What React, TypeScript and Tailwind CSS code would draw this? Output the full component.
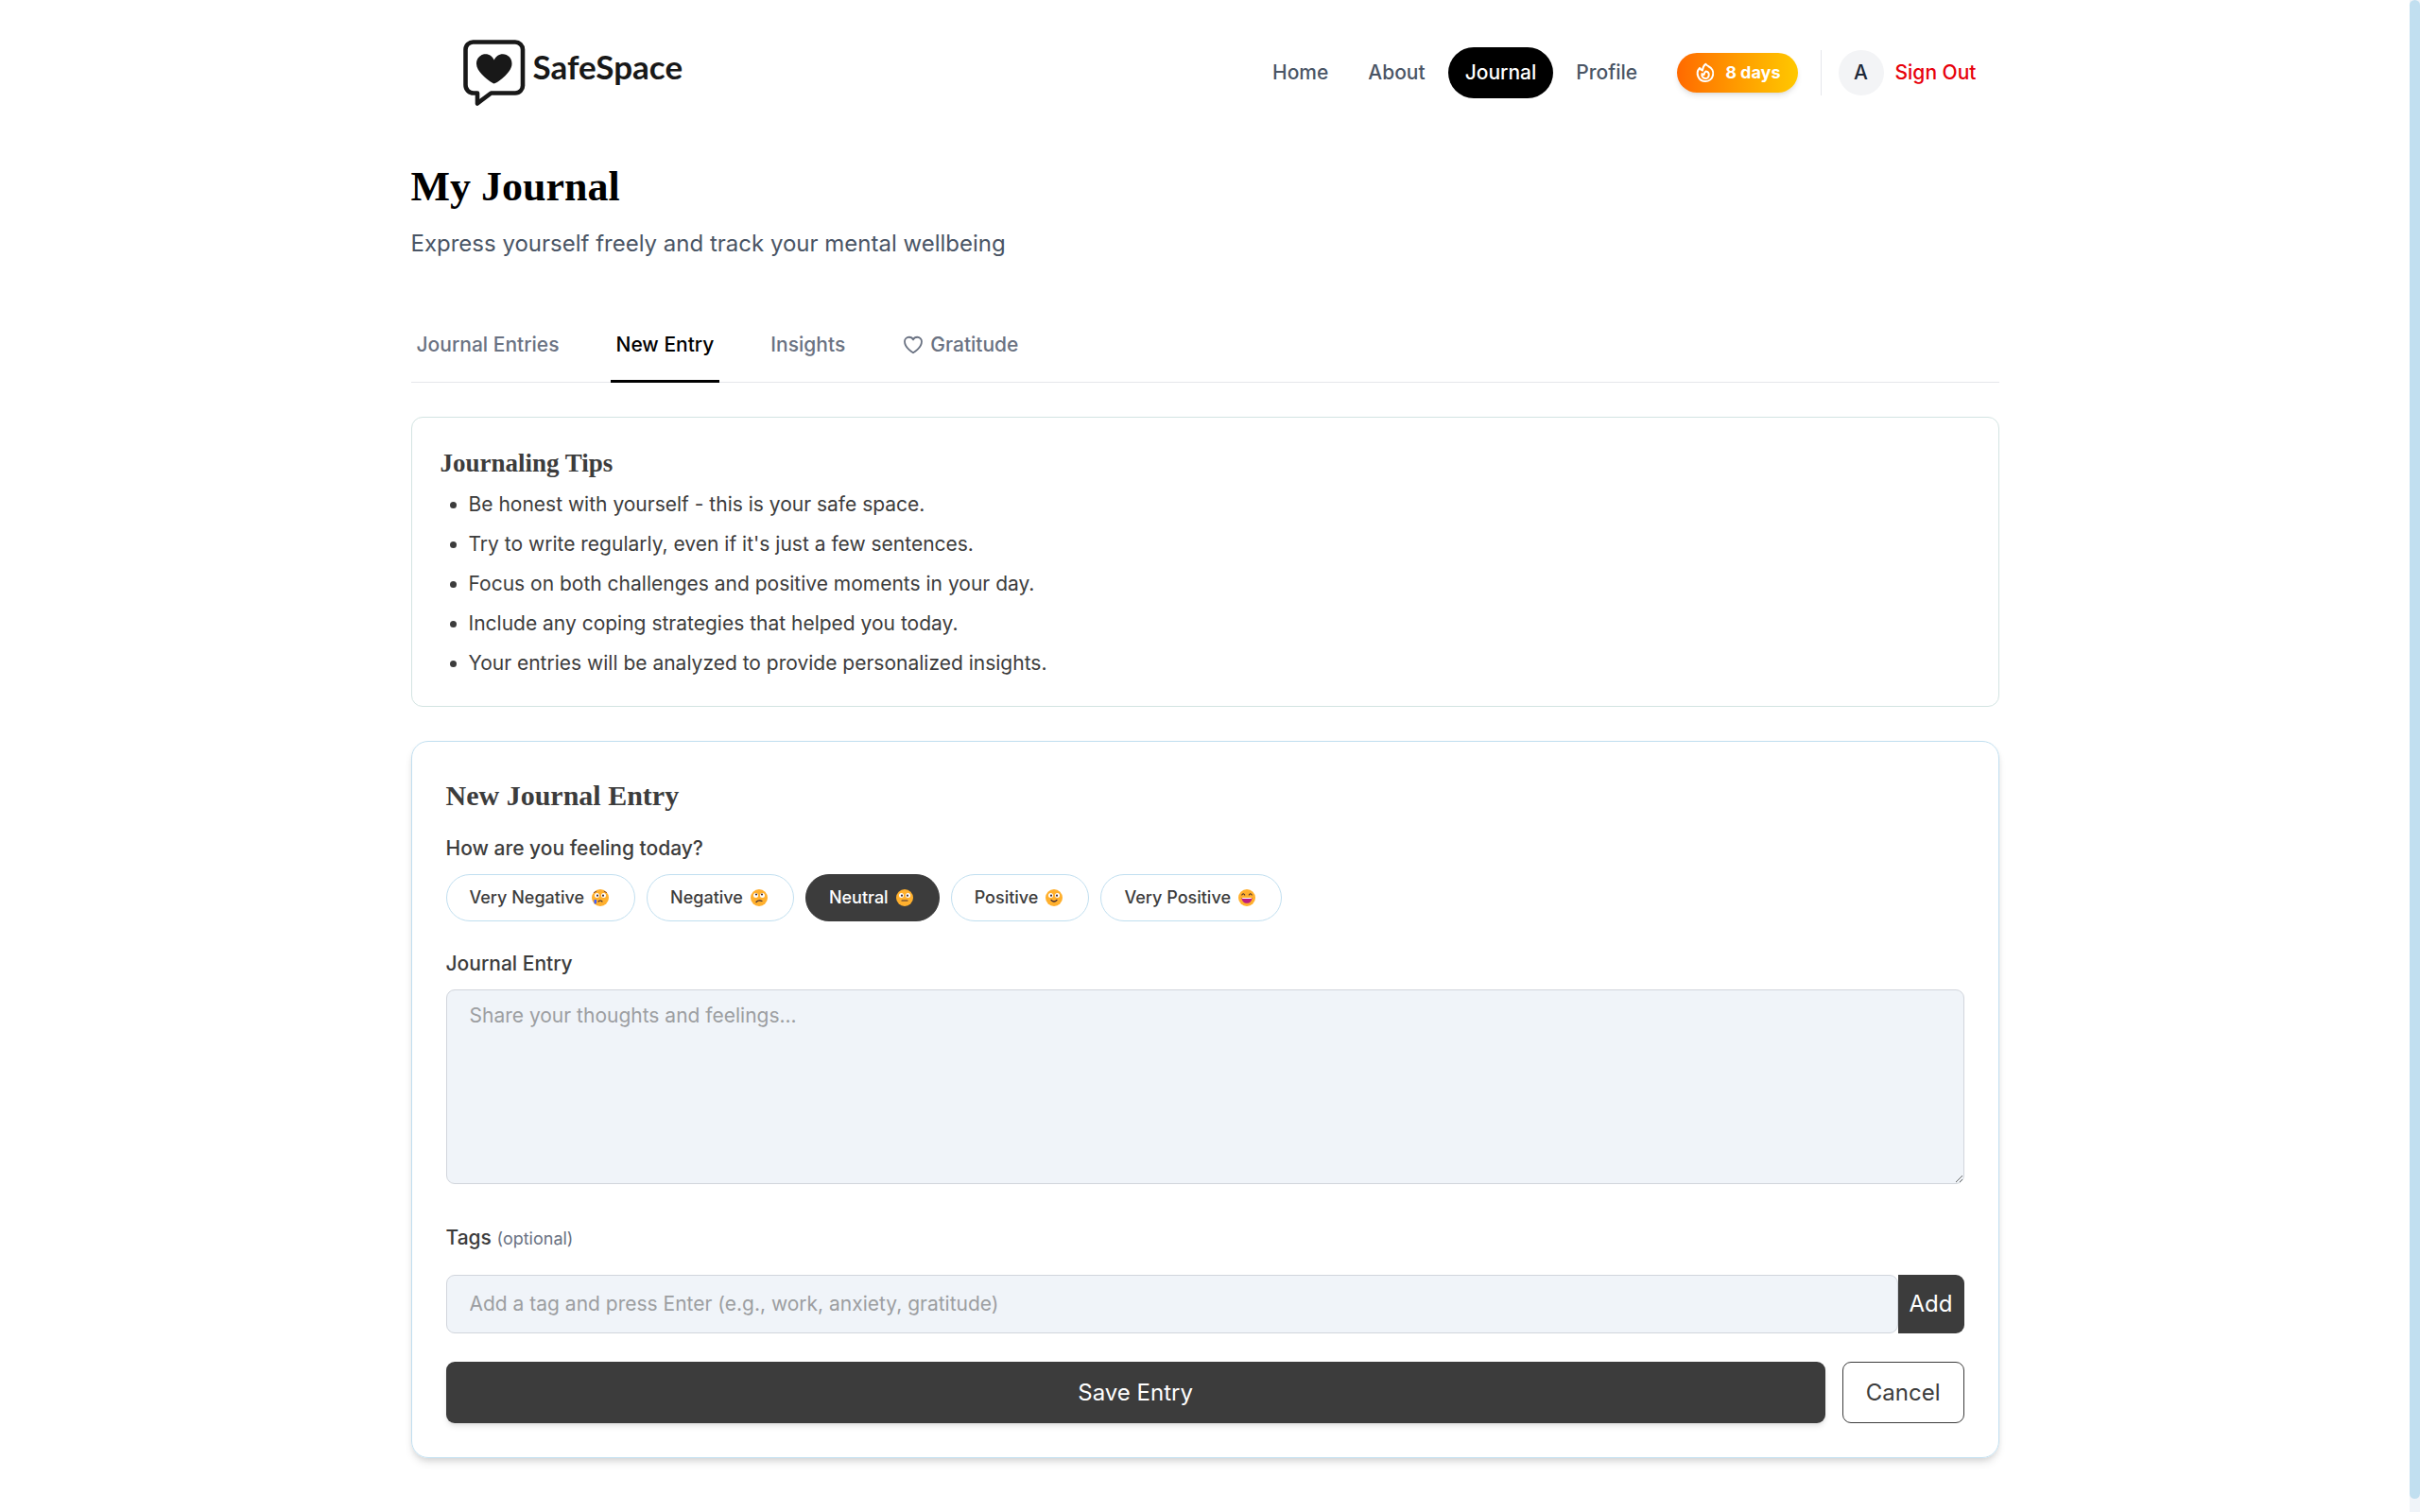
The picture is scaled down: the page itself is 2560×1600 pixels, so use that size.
import { useState } from "react";

const navLink =
  "rounded-full px-[18px] py-3 text-[21px] leading-[30px] font-medium";

function Logo() {
  return (
    <a href="#" aria-label="SafeSpace" className="flex items-start gap-2 text-[#181818]">
      <svg viewBox="0 0 66 72" className="h-[72px] w-[66px]" fill="none">
        <path
          d="M11 2.500H55A8 8 0 0 1 63 10.500V48A8 8 0 0 1 55 56.500H29.500L15 67.500V56.500H11A8.500 8.500 0 0 1 2.500 48V10.500A8 8 0 0 1 11 2.500Z"
          stroke="currentColor"
          strokeWidth="4.600"
          strokeLinejoin="round"
        />
        <path
          d="M32.700 46.500C31 46.500 14 35.500 14 25.500C14 19.500 18.500 15.300 23.500 15.300C28 15.300 31 18 32.700 21.500C34.400 18 37.500 15.300 42 15.300C47 15.300 51.500 19.500 51.500 25.500C51.500 35.500 34.500 46.500 32.700 46.500Z"
          fill="currentColor"
        />
      </svg>
      <span className="mt-2 font-[Lato] text-[35px] leading-[40px] font-bold">SafeSpace</span>
    </a>
  );
}

function Flame() {
  return (
    <svg viewBox="0 0 24 24" className="size-6" fill="none" stroke="currentColor" strokeWidth="2" strokeLinecap="round" strokeLinejoin="round">
      <path d="M15.362 5.214A8.252 8.252 0 0 1 12 21 8.250 8.250 0 0 1 6.038 7.048 8.287 8.287 0 0 0 9 9.600a8.983 8.983 0 0 1 3.361-6.867 8.210 8.210 0 0 0 3 2.480Z" />
      <path d="M12 18a3.750 3.750 0 0 0 .495-7.467 5.990 5.990 0 0 0-1.925 3.546 5.974 5.974 0 0 1-2.133-1.001A3.750 3.750 0 0 0 12 18Z" />
    </svg>
  );
}

function HeartOutline() {
  return (
    <svg viewBox="0 0 24 24" className="size-6" fill="none" stroke="currentColor" strokeWidth="1.8" strokeLinecap="round" strokeLinejoin="round">
      <path d="M21 8.250c0-2.485-2.099-4.500-4.688-4.500-1.935 0-3.597 1.126-4.312 2.733-.715-1.607-2.377-2.733-4.313-2.733C5.100 3.750 3 5.765 3 8.250c0 7.220 9 12 9 12s9-4.780 9-12Z" />
    </svg>
  );
}

type Mood = "crying" | "worried" | "neutral" | "smile" | "laugh";

function Face({ mood }: { mood: Mood }) {
  return (
    <svg viewBox="0 0 18 18" className="size-[18px]" fill="none" strokeLinecap="round">
      <circle cx="9" cy="9" r="9" fill="#FFB02E" />
      {mood === "laugh" ? (
        <>
          <path d="M3.800 6Q5.200 3.500 6.700 6M11.300 6Q12.800 3.500 14.200 6" stroke="#402A32" strokeWidth="1.100" />
          <path d="M3.500 9H14.500C14.500 12.500 12 14.800 9 14.800S3.500 12.500 3.500 9Z" fill="#BB1D80" />
          <path d="M4 9H14L13.700 10H4.300Z" fill="#fff" />
        </>
      ) : (
        <>
          <circle cx="5.500" cy="6.500" r="2.500" fill="#fff" />
          <circle cx="12.500" cy="6.500" r="2.500" fill="#fff" />
          <circle cx="6" cy={mood === "worried" ? 5.500 : 6.700} r="1.100" fill="#402A32" />
          <circle cx="12" cy={mood === "worried" ? 5.500 : 6.700} r="1.100" fill="#402A32" />
        </>
      )}
      {mood === "crying" && (
        <>
          <path d="M2.500 3.500L4.800 2.300M15.500 3.500L13.200 2.300" stroke="#7D4533" strokeWidth="1" />
          <path d="M7 13Q9 11 11 13" stroke="#402A32" strokeWidth="1.100" />
          <path d="M2.500 11H5V14.500A1.300 1.300 0 0 1 2.500 14.500Z" fill="#3F5FFF" />
        </>
      )}
      {mood === "worried" && <path d="M6 13.500Q8.500 11 12 12.500" stroke="#402A32" strokeWidth="1.200" />}
      {mood === "neutral" && <path d="M6 12H12" stroke="#402A32" strokeWidth="1.200" />}
      {mood === "smile" && <path d="M6 11.500Q9 14.500 12 11.500" stroke="#402A32" strokeWidth="1.200" />}
    </svg>
  );
}

const moods: { label: string; mood: Mood }[] = [
  { label: "Very Negative", mood: "crying" },
  { label: "Negative", mood: "worried" },
  { label: "Neutral", mood: "neutral" },
  { label: "Positive", mood: "smile" },
  { label: "Very Positive", mood: "laugh" },
];

const tips = [
  "Be honest with yourself - this is your safe space.",
  "Try to write regularly, even if it's just a few sentences.",
  "Focus on both challenges and positive moments in your day.",
  "Include any coping strategies that helped you today.",
  "Your entries will be analyzed to provide personalized insights.",
];

const tabs = ["Journal Entries", "New Entry", "Insights", "Gratitude"];

export default function App() {
  const [mood, setMood] = useState<Mood>("neutral");
  const [tab, setTab] = useState("New Entry");

  return (
    <div className="flex min-h-screen bg-white font-[Inter,sans-serif] text-[#3c3c3c]">
      <div className="min-w-0 flex-1">
        <div className="mx-auto max-w-[1728px] px-6">
          <header className="flex items-start justify-between pt-[42px] pr-6 pl-[55px]">
            <Logo />
            <nav className="flex items-center pt-2 text-[#4a5565]">
              <div className="flex gap-1.5">
                <a href="#" className={navLink}>Home</a>
                <a href="#" className={navLink}>About</a>
                <a href="#" aria-current="page" className={`${navLink} bg-black text-white`}>Journal</a>
                <a href="#" className={navLink}>Profile</a>
              </div>
              <div className="ml-6 flex h-[42px] items-center gap-[9px] rounded-full bg-linear-to-r from-[#ff6900] to-[#ffc800] px-[18px] text-lg font-bold text-white shadow-md">
                <Flame />
                8 days
              </div>
              <div className="ml-6 flex items-center border-l border-gray-200 pl-[18px]">
                <div className="grid size-12 place-items-center rounded-full bg-gray-100 text-[21px] font-medium text-[#1e2939]">A</div>
                <button type="button" className="ml-3 text-[21px] font-medium text-[#e7000b]">Sign Out</button>
              </div>
            </nav>
          </header>

          <main className="pt-[54px]">
            <h1 className="font-['Liberation_Serif',serif] text-[44px] leading-[60px] font-bold text-black">My Journal</h1>
            <p className="mt-3 text-2xl leading-9 text-[#4a5565]">Express yourself freely and track your mental wellbeing</p>

            <div role="tablist" className="mt-[50px] flex gap-12 border-b border-gray-200">
              {tabs.map((name) => (
                <button
                  key={name}
                  type="button"
                  role="tab"
                  aria-selected={tab === name}
                  onClick={() => setTab(name)}
                  className={`-mb-px flex items-center gap-1.5 border-b-3 px-1.5 pt-6 pb-[22px] text-[21px] leading-[30px] font-medium ${
                    tab === name ? "border-black text-black" : "border-transparent text-[#6a7282]"
                  }`}
                >
                  {name === "Gratitude" && <HeartOutline />}
                  {name}
                </button>
              ))}
            </div>

            <section className="mt-9 rounded-xl border border-[#d3e4e2] p-[30px]">
              <h2 className="font-['Liberation_Serif',serif] text-[27px] leading-[36px] font-bold">Journaling Tips</h2>
              <ul className="mt-[11px] flex list-disc flex-col gap-3 pl-[30px] text-[21px] leading-[30px]">
                {tips.map((t) => (
                  <li key={t}>{t}</li>
                ))}
              </ul>
            </section>

            <form className="mt-9 mb-14 rounded-[18px] border border-[#c1dff0] p-9 shadow-[0_6px_9px_-1px_rgb(0_0_0/0.1),0_3px_6px_-2px_rgb(0_0_0/0.1)]">
              <h2 className="font-['Liberation_Serif',serif] text-[30px] leading-[42px] font-bold">New Journal Entry</h2>
              <fieldset className="mt-5">
                <legend className="text-[21px] leading-[30px] font-medium">How are you feeling today?</legend>
                <div className="mt-3 flex flex-wrap gap-3">
                  {moods.map((m) => (
                    <button
                      key={m.mood}
                      type="button"
                      aria-pressed={mood === m.mood}
                      onClick={() => setMood(m.mood)}
                      className={`flex h-[50px] items-center gap-2 rounded-full border pr-[27px] pl-6 text-lg font-medium ${
                        mood === m.mood ? "border-[#3c3c3c] bg-[#3c3c3c] text-white" : "border-[#c1dff0]"
                      }`}
                    >
                      {m.label}
                      <Face mood={m.mood} />
                    </button>
                  ))}
                </div>
              </fieldset>

              <label htmlFor="entry" className="mt-[30px] block text-[21px] leading-[30px] font-medium">Journal Entry</label>
              <textarea
                id="entry"
                placeholder="Share your thoughts and feelings..."
                className="mt-3 block h-[206px] w-full resize rounded-[9px] border border-gray-300 bg-[#f0f4f9] px-6 py-3 text-[21px] leading-[30px] placeholder:text-[#9c9ea1]"
              />

              <label htmlFor="tag" className="mt-[42px] block text-[21px] leading-[30px] font-medium">
                Tags <span className="text-lg font-normal text-[#6a7282]">(optional)</span>
              </label>
              <div className="mt-6 flex h-[62px]">
                <input
                  id="tag"
                  type="text"
                  placeholder="Add a tag and press Enter (e.g., work, anxiety, gratitude)"
                  className="min-w-0 flex-1 rounded-[9px] border border-gray-300 bg-[#f0f4f9] px-6 text-[21px] placeholder:text-[#9c9ea1]"
                />
                <button type="button" className="rounded-r-[9px] bg-[#3c3c3c] px-3 text-2xl text-white">Add</button>
              </div>

              <div className="mt-[30px] flex h-[65px] gap-[18px]">
                <button type="submit" className="flex-1 rounded-[9px] bg-[#3c3c3c] text-2xl text-white shadow-md">Save Entry</button>
                <button type="button" className="rounded-[9px] border border-[#3c3c3c] px-6 text-2xl">Cancel</button>
              </div>
            </form>
          </main>
        </div>
      </div>
      <div aria-hidden="true" className="flex w-[11px] flex-col bg-[#f0f4f9] pb-[14px]">
        <div className="flex-1 rounded-full bg-[#c1dff0]" />
      </div>
    </div>
  );
}
